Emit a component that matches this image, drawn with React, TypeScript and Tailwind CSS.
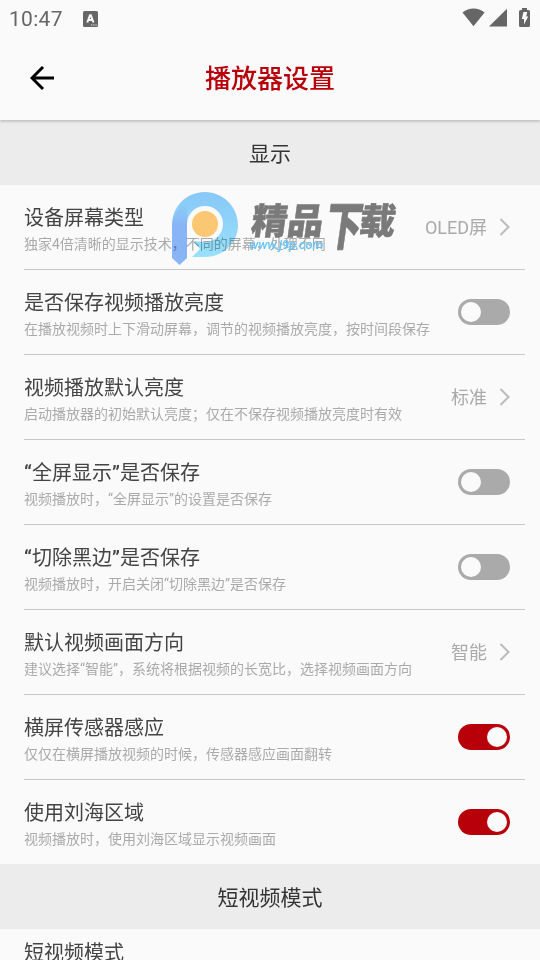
import React from 'react';

interface Setting {
  title: string;
  desc?: string;
  value?: string;
  on?: boolean;
}

const DISPLAY_SETTINGS: Setting[] = [
  { title: '设备屏幕类型', desc: '独家4倍清晰的显示技术，不同的屏幕，处理不同', value: 'OLED屏' },
  { title: '是否保存视频播放亮度', desc: '在播放视频时上下滑动屏幕，调节的视频播放亮度，按时间段保存', on: false },
  { title: '视频播放默认亮度', desc: '启动播放器的初始默认亮度；仅在不保存视频播放亮度时有效', value: '标准' },
  { title: '“全屏显示”是否保存', desc: '视频播放时，“全屏显示”的设置是否保存', on: false },
  { title: '“切除黑边”是否保存', desc: '视频播放时，开启关闭“切除黑边”是否保存', on: false },
  { title: '默认视频画面方向', desc: '建议选择“智能”，系统将根据视频的长宽比，选择视频画面方向', value: '智能' },
  { title: '横屏传感器感应', desc: '仅仅在横屏播放视频的时候，传感器感应画面翻转', on: true },
  { title: '使用刘海区域', desc: '视频播放时，使用刘海区域显示视频画面', on: true }
];

function StatusBar() {
  return <div className="flex h-9 shrink-0 items-center justify-between pl-[9px] pr-[10px] text-[#666]">
      <div className="flex items-center pt-px">
        <span className="w-[74px] text-[21px] leading-9 tracking-[0.3px]">10:47</span>
        <svg width="15" height="16" viewBox="0 0 15 16">
          <rect width="15" height="16" rx="1.5" fill="#666" />
          <path d="M4.300 11.500 7 4.200h.8l2.700 7.300M5.300 9h4.200" fill="none" stroke="#fafafa" strokeWidth="2" />
          <path d="M8 14h1.200M10.300 14h1.200M12.500 14h1.200" stroke="#fafafa" strokeWidth="1.2" />
        </svg>
      </div>
      <svg width="68" height="20" viewBox="0 0 68 20" fill="#666">
        <path d="M.5 4.500C7 -.7 16 -.7 22.600 4.500L11.500 18.200Z" />
        <path d="M27 18.500 45 .8V18.500Z" />
        <path d="M60 0h5v2h1.500q1.500 0 1.500 1.500v14q0 1.500-1.500 1.500h-8q-1.500 0-1.500-1.500v-14q0-1.500 1.500-1.500H60Z" />
        <path d="M61.500 4h3.700l-1 4.500h2L62 16.500V11h-2.200Z" fill="#fafafa" />
      </svg>
    </div>;
}

function Header() {
  return <div className="relative z-10 flex h-[84px] shrink-0 items-center justify-center bg-[#fafafa] shadow-[0_2px_2px_rgba(0,0,0,0.16)]">
      <button className="absolute left-[30px] top-[30px]" aria-label="返回">
        <svg width="25" height="25" viewBox="0 0 25 25" fill="none" stroke="#000" strokeWidth="3">
          <path d="M24 12H2M13 1 2 12l11 11" />
        </svg>
      </button>
      <h1 className="pt-[2px] text-[26px] font-medium leading-9 text-[#b8000b]">播放器设置</h1>
    </div>;
}

function SectionTitle({ children }: { children: React.ReactNode }) {
  return <h2 className="flex h-[65px] shrink-0 items-center justify-center bg-[#ececec] pt-[4px] text-[21px] text-[#333]">
      {children}
    </h2>;
}

function Switch({ on }: { on: boolean }) {
  return <button role="switch" aria-checked={on} className={`flex h-[26px] w-[52px] items-center rounded-full px-[3px] ${on ? 'justify-end bg-[#b8000b]' : 'justify-start bg-[#aaa]'}`}>
      <span className="h-5 w-5 rounded-full bg-[#fafafa]" />
    </button>;
}

function SettingRow({ item, last }: { item: Setting; last?: boolean }) {
  // quotes are set heavier than the characters around them
  const parts = item.title.split(/([“”])/);
  return <div className={`ml-6 mr-[15px] flex shrink-0 items-center justify-between pr-[15px] ${last ? 'h-[84px]' : 'h-[85px] border-b border-[#c8c8c8]'}`}>
      <div className="whitespace-nowrap pt-[3px]">
        <p className="text-xl leading-7 text-[#444]">
          {parts.map((part, i) => i % 2 ? <span key={i} className="inline-block w-2 font-semibold">{part}</span> : part)}
        </p>
        <p className="mt-[2px] h-5 text-sm leading-5 text-[#aaa]">{item.desc}</p>
      </div>
      {item.value && <div className="flex items-center gap-3 text-lg text-[#aaa]">
          <span className="pt-[2px]">{item.value}</span>
          <svg width="11" height="18" viewBox="0 0 11 18" fill="none" stroke="#bbb" strokeWidth="2">
            <path d="M1.500 1 9.500 9l-8 8" />
          </svg>
        </div>}
      {item.on !== undefined && <Switch on={item.on} />}
    </div>;
}

function Watermark() {
  return <>
      <svg className="pointer-events-none absolute left-[168px] top-[188px] mix-blend-multiply" width="234" height="80" viewBox="168 188 234 80">
        <defs>
          <linearGradient id="ring" x1="0" y1="0" x2="0" y2="1">
            <stop offset="0" stopColor="#8accfc" />
            <stop offset="1" stopColor="#9ce6ff" />
          </linearGradient>
          <linearGradient id="stem" x1="0" y1="0" x2="0" y2="1">
            <stop offset="0" stopColor="#8cb9fb" stopOpacity="0" />
            <stop offset="0.35" stopColor="#8cb9fb" />
          </linearGradient>
        </defs>
        <path d="M172 225C172 206 187 192 205 192S238 207 238 225S223 257 205 257H192L200 249L193 241L187 236V225Z" fill="url(#ring)" />
        <path d="M172 225Q173 211 187 202V258L179.500 265 172 258Z" fill="url(#stem)" />
        <path d="M187 224a18 18 0 1 1 18 18c-5 0-8-1-12-1l-1 2h-5Z" fill="#fff" />
        <circle cx="205" cy="224" r="13" fill="#ffcb75" />
        <g transform="translate(250 234) skewX(-8)" className="text-[36px] font-black" fill="#7c7c7c" stroke="#7c7c7c" strokeWidth="0.5">
          <text>精品</text>
          <text transform="translate(75 11) scale(1 1.45)">下</text>
          <text x="108">载</text>
        </g>
      </svg>
      <span className="pointer-events-none absolute left-[249px] top-[237px] text-[13px] font-medium italic leading-4 tracking-[-0.2px] text-[#67c5fa]">www.j9p.com</span>
    </>;
}

export default function App() {
  return <div className="relative flex h-[960px] w-[540px] flex-col overflow-hidden bg-[#fafafa] font-['Roboto','Noto_Sans_CJK_SC',sans-serif]">
      <StatusBar />
      <Header />
      <SectionTitle>显示</SectionTitle>
      {DISPLAY_SETTINGS.map((item, i) => <SettingRow key={item.title} item={item} last={i === DISPLAY_SETTINGS.length - 1} />)}
      <SectionTitle>短视频模式</SectionTitle>
      <p className="ml-6 shrink-0 pt-[10px] text-xl leading-7 text-[#444]">短视频模式</p>
      <Watermark />
    </div>;
}
